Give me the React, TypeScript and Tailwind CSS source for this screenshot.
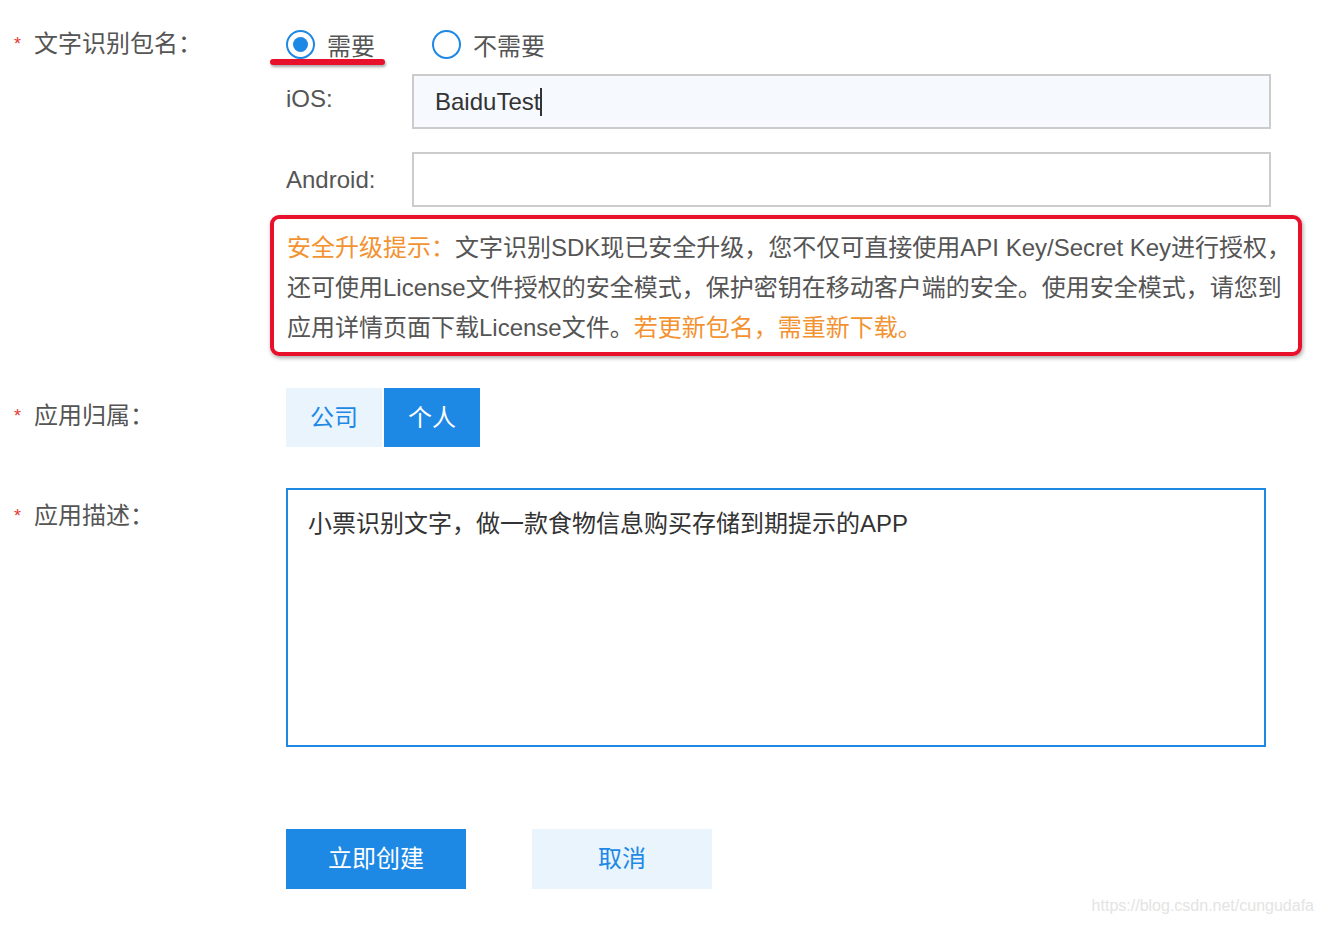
import { useState } from 'react';

const FONT = { fontFamily: '"Liberation Sans", "Noto Sans CJK SC", sans-serif' };

function FieldLabel({ text }: { text: string }) {
  return (
    <div className="w-[286px] shrink-0 flex items-start pl-[14px] text-[24px] text-[#555] leading-[40px]">
      <span className="text-[#e53935] text-[18px] w-[20px]">*</span>
      <span>{text}：</span>
    </div>
  );
}

function Radio({ checked, label, onClick }: { checked: boolean; label: string; onClick: () => void }) {
  return (
    <button type="button" onClick={onClick} className="flex items-center gap-[12px] text-[24px] text-[#555]">
      <span className="w-[29px] h-[29px] rounded-full border-[2.5px] border-[#1e88e5] flex items-center justify-center">
        {checked && <span className="w-[15px] h-[15px] rounded-full bg-[#1e88e5]" />}
      </span>
      <span className="leading-[40px] pt-[6px]">{label}</span>
    </button>
  );
}

export default function App() {
  const [need, setNeed] = useState(true);
  const [owner, setOwner] = useState<'company' | 'personal'>('personal');

  return (
    <div className="relative w-[1324px] h-[926px] bg-white overflow-hidden" style={FONT}>
      <div className="flex flex-col pt-[24px]">
        {/* package name */}
        <div className="flex">
          <FieldLabel text="文字识别包名" />
          <div className="flex flex-col">
            <div className="relative flex items-center gap-[57px] h-[40px]">
              <Radio checked={need} label="需要" onClick={() => setNeed(true)} />
              <Radio checked={!need} label="不需要" onClick={() => setNeed(false)} />
              <div className="absolute left-[-16px] top-[35px] w-[115px] h-[6px] rounded-full bg-[#e8102a] shadow-[1px_2px_3px_rgba(0,0,0,0.35)]" />
            </div>
            <div className="flex items-center mt-[10px]">
              <span className="w-[126px] text-[24px] text-[#555] pb-[6px]">iOS:</span>
              <div className="w-[859px] h-[55px] border-2 border-[#ccc] bg-[#f6f9fd] flex items-center px-[21px] text-[24px] text-[#333]">
                BaiduTest<span className="inline-block w-[2px] h-[28px] bg-[#333]" />
              </div>
            </div>
            <div className="flex items-center mt-[23px]">
              <span className="w-[126px] text-[24px] text-[#555]">Android:</span>
              <div className="w-[859px] h-[55px] border-2 border-[#ccc] bg-white" />
            </div>
            <div className="ml-[-16px] mt-[8px] w-[1032px] border-4 border-[#e8102a] rounded-[9px] shadow-[1px_2px_4px_rgba(0,0,0,0.35)] pl-[13px] pt-[9px] pb-[4px] text-[24px] leading-[40px] text-[#555] whitespace-nowrap">
              <span className="text-[#f39231]">安全升级提示：</span>文字识别SDK现已安全升级，您不仅可直接使用API Key/Secret Key进行授权，
              <br />
              还可使用License文件授权的安全模式，保护密钥在移动客户端的安全。使用安全模式，请您到
              <br />
              应用详情页面下载License文件。<span className="text-[#f39231]">若更新包名，需重新下载。</span>
            </div>
          </div>
        </div>

        {/* owner */}
        <div className="flex mt-[32px]">
          <div className="pt-[8px]">
            <FieldLabel text="应用归属" />
          </div>
          <div className="flex gap-[2px]">
            <button
              type="button"
              onClick={() => setOwner('company')}
              className={`w-[96px] h-[59px] text-[24px] ${owner === 'company' ? 'bg-[#1e88e5] text-white' : 'bg-[#e9f4fd] text-[#1e88e5]'}`}
            >
              公司
            </button>
            <button
              type="button"
              onClick={() => setOwner('personal')}
              className={`w-[96px] h-[59px] text-[24px] ${owner === 'personal' ? 'bg-[#1e88e5] text-white' : 'bg-[#e9f4fd] text-[#1e88e5]'}`}
            >
              个人
            </button>
          </div>
        </div>

        {/* description */}
        <div className="flex mt-[41px]">
          <div className="pt-[8px]">
            <FieldLabel text="应用描述" />
          </div>
          <div className="w-[980px] h-[259px] border-[2.5px] border-[#1e88e5] px-[20px] pt-[14px] text-[24px] leading-[40px] text-[#333]">
            小票识别文字，做一款食物信息购买存储到期提示的APP
          </div>
        </div>

        {/* actions */}
        <div className="flex pl-[286px] gap-[66px] mt-[82px]">
          <button type="button" className="w-[180px] h-[60px] bg-[#1e88e5] text-white text-[24px]">
            立即创建
          </button>
          <button type="button" className="w-[180px] h-[60px] bg-[#e9f4fd] text-[#1e88e5] text-[24px]">
            取消
          </button>
        </div>
      </div>

      <div className="absolute right-[10px] bottom-[8px] text-[16px] text-[#e4e4e4]">
        https://blog.csdn.net/cungudafa
      </div>
    </div>
  );
}
